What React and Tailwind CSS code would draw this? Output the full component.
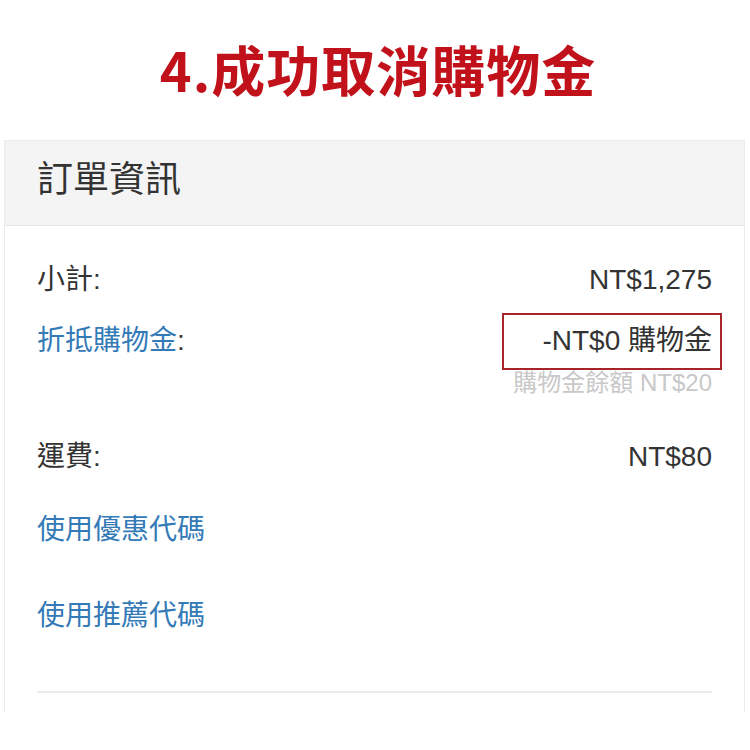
const cjk = { fontFamily: '"Liberation Sans", "Noto Sans CJK TC", sans-serif' };

const Row = ({ label, value, blue, className = '' }) => (
  <div className={`flex h-[60px] items-center justify-between text-[28px] leading-[60px] ${className}`}>
    <span className={blue ? 'text-[#337ab7]' : 'text-[#333333]'}>
      {label}
      <span className="text-[#333333]">:</span>
    </span>
    <span className="text-[#333333]">{value}</span>
  </div>
);

const App = () => {
  return (
    <div className="h-[750px] w-[750px] overflow-hidden bg-white" style={cjk}>
      {/* annotation title */}
      <div className="flex h-[140px] items-center justify-center pb-[2px] pl-[6px]">
        <h1
          className="text-[54px] font-bold leading-none tracking-[1px] text-[#c1121c]"
          style={{ fontFamily: '"Noto Sans CJK TC", sans-serif' }}
        >
          4.成功取消購物金
        </h1>
      </div>

      <div className="ml-[4px] mr-[5px] border-x border-t border-[#ececec]">
        <div className="flex h-[85px] items-center border-b border-[#e6e6e6] bg-[#f4f4f4] px-[32px] pb-[6px]">
          <h2 className="text-[36px] leading-none text-[#333333]">訂單資訊</h2>
        </div>

        <div className="px-[32px] pt-[24px] pb-[19px]">
          <Row label="小計" value="NT$1,275" />

          <div className="flex h-[62px] items-center justify-between text-[28px]">
            <span className="text-[#337ab7]">
              折抵購物金<span className="text-[#333333]">:</span>
            </span>
            <span className="relative text-[#333333]">
              -NT$0 購物金
              <span className="absolute -top-[7px] -bottom-[8px] -left-[40px] -right-[10px] border-2 border-[#a8242b]" />
            </span>
          </div>
          <div className="h-[22px] text-right text-[24px] leading-[22px] text-[#c8c8c8]">購物金餘額 NT$20</div>

          <Row label="運費" value="NT$80" className="mt-[33px]" />

          <div className="mt-[13px] h-[60px] text-[28px] leading-[60px] text-[#337ab7]">使用優惠代碼</div>
          <div className="mt-[26px] h-[60px] text-[28px] leading-[60px] text-[#337ab7]">使用推薦代碼</div>

          <div className="mt-[45px] border-t-2 border-[#ebebeb]" />
        </div>
      </div>
    </div>
  );
};

export default App;
